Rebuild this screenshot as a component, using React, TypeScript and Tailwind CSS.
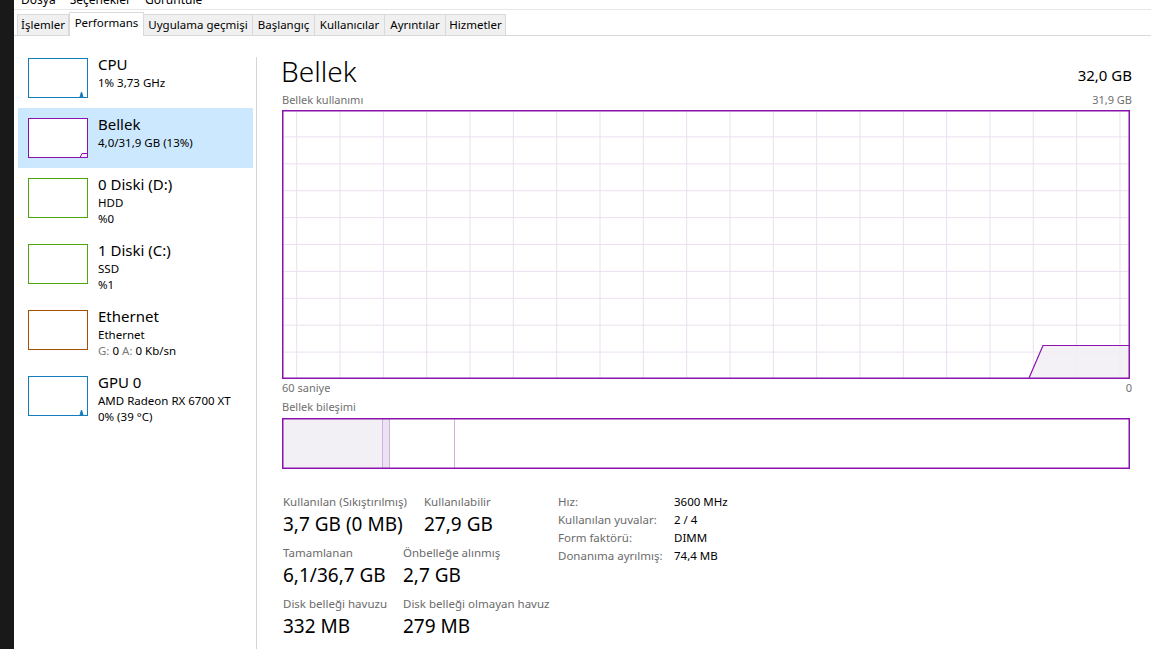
import React from 'react';

const PURPLE = '#8b12ae';

const tabs = [
  { label: 'İşlemler', w: 'w-[52px]' },
  { label: 'Performans', w: 'w-[75px]', active: true },
  { label: 'Uygulama geçmişi', w: 'w-[109px]' },
  { label: 'Başlangıç', w: 'w-[62px]' },
  { label: 'Kullanıcılar', w: 'w-[70px]' },
  { label: 'Ayrıntılar', w: 'w-[61px]' },
  { label: 'Hizmetler', w: 'w-[60px]' },
];

const Thumb: React.FC<{ color: string; kind?: 'spike' | 'mem' }> = ({ color, kind }) => (
  <svg width="60" height="40" viewBox="0 0 60 40" className="shrink-0">
    <rect x="0.5" y="0.5" width="59" height="39" fill="white" stroke={color} strokeWidth="1" />
    {kind === 'spike' && <polyline points="52,39 53.5,34 55,39" fill={color} stroke={color} strokeWidth="1" />}
    {kind === 'mem' && <polygon points="52,39.5 54,35.5 59.5,35.5 59.5,39.5" fill="#f3eef5" stroke={color} strokeWidth="1" />}
  </svg>
);

interface SideItemProps {
  title: string;
  lines: React.ReactNode[];
  color: string;
  kind?: 'spike' | 'mem';
  selected?: boolean;
  tall?: boolean;
}

const SideItem: React.FC<SideItemProps> = ({ title, lines, color, kind, selected, tall }) => (
  <div className={`flex gap-[10px] px-[10px] pt-[10px] ${tall ? 'h-[66px]' : 'h-[60px]'} ${selected ? 'bg-[#cce8ff]' : ''}`}>
    <Thumb color={color} kind={kind} />
    <div className="flex flex-col text-black -mt-[3px]">
      <div className="text-[15px] leading-[19px]">{title}</div>
      {lines.map((l, i) => (
        <div key={i} className="text-[11.5px] leading-[15px] mt-[1px]">{l}</div>
      ))}
    </div>
  </div>
);

const UsageGraph: React.FC = () => {
  const w = 848;
  const h = 269;
  const vx: number[] = [];
  for (let x = 14.7; x < w; x += 43.33) vx.push(x);
  const hy: number[] = [];
  for (let i = 1; i < 10; i++) hy.push((h / 10) * i);
  return (
    <svg width={w} height={h} viewBox={`0 0 ${w} ${h}`} className="block">
      {vx.map((x) => (
        <line key={x} x1={x} y1={0} x2={x} y2={h} stroke="#ebdff0" strokeWidth="1" />
      ))}
      {hy.map((y) => (
        <line key={y} x1={0} y1={y} x2={w} y2={y} stroke="#ebdff0" strokeWidth="1" />
      ))}
      <polygon points={`747,${h - 1} 761,235.5 ${w - 1},235.5 ${w - 1},${h - 1}`} fill="#f1eef3" fillOpacity="0.85" />
      <polyline points={`747,${h - 1} 761,235.5 ${w - 1},235.5`} fill="none" stroke={PURPLE} strokeWidth="1.2" />
      <rect x="0.75" y="0.75" width={w - 1.5} height={h - 1.5} fill="none" stroke={PURPLE} strokeWidth="1.5" />
    </svg>
  );
};

const CompositionBar: React.FC = () => (
  <svg width="848" height="51" viewBox="0 0 848 51" className="block">
    <rect x="0" y="0" width="100" height="51" fill="#f3f0f5" />
    <rect x="100" y="0" width="7" height="51" fill="#ece2f1" />
    <line x1="100.5" y1="0" x2="100.5" y2="51" stroke="#cdb3da" />
    <line x1="107.5" y1="0" x2="107.5" y2="51" stroke="#cdb3da" />
    <line x1="172.5" y1="0" x2="172.5" y2="51" stroke="#cdb3da" />
    <rect x="0.75" y="0.75" width="846.5" height="49.5" fill="none" stroke={PURPLE} strokeWidth="1.5" />
  </svg>
);

const Stat: React.FC<{ label: string; value: string; w: string }> = ({ label, value, w }) => (
  <div className={`${w} shrink-0`}>
    <div className="text-[11.5px] leading-[16px] text-[#6b6b6b] whitespace-nowrap">{label}</div>
    <div className="text-[19px] leading-[29px] text-black whitespace-nowrap">{value}</div>
  </div>
);

const infoRows = [
  ['Hız:', '3600 MHz'],
  ['Kullanılan yuvalar:', '2 / 4'],
  ['Form faktörü:', 'DIMM'],
  ['Donanıma ayrılmış:', '74,4 MB'],
];

export default function App() {
  return (
    <div className="flex w-[1165px] h-[649px] overflow-hidden bg-white font-['Noto_Sans',sans-serif]">
      <div className="w-[14px] shrink-0 bg-[#191919]" />
      <div className="w-[1137px] shrink-0 flex flex-col">
        {/* menu */}
        <div className="h-[10px] overflow-hidden border-b border-[#e6e6e6] shrink-0">
          <div className="flex text-[12px] leading-[16px] -mt-[8px] pl-[7px] gap-[14px] text-black">
            <span>Dosya</span>
            <span>Seçenekler</span>
            <span>Görüntüle</span>
          </div>
        </div>
        {/* tabs */}
        <div className="h-[26px] flex items-end pl-[3px] border-b border-[#d9d9d9] shrink-0">
          {tabs.map((t) =>
            t.active ? (
              <div
                key={t.label}
                className={`${t.w} h-[24px] -mb-[1px] bg-white border border-b-0 border-[#d9d9d9] text-[11.5px] text-black flex items-center justify-center pb-[3px]`}
              >
                {t.label}
              </div>
            ) : (
              <div
                key={t.label}
                className={`${t.w} h-[21px] bg-[#f0f0f0] border border-b-0 border-l-0 first:border-l border-[#d9d9d9] text-[11.5px] text-black flex items-center justify-center`}
              >
                {t.label}
              </div>
            )
          )}
        </div>
        <div className="flex flex-1 min-h-0">
          {/* sidebar */}
          <div className="w-[243px] shrink-0 flex">
            <div className="flex-1 pl-[4px] pr-[3px] pt-[12px] flex flex-col">
              <SideItem title="CPU" lines={['1%  3,73 GHz']} color="#117dbb" kind="spike" />
              <SideItem title="Bellek" lines={['4,0/31,9 GB (13%)']} color={PURPLE} kind="mem" selected />
              <SideItem title="0 Diski (D:)" lines={['HDD', '%0']} color="#4da60c" tall />
              <SideItem title="1 Diski (C:)" lines={['SSD', '%1']} color="#4da60c" tall />
              <SideItem
                title="Ethernet"
                lines={[
                  'Ethernet',
                  <span key="e">
                    <span className="text-[#7a7a7a]">G:</span> 0 <span className="text-[#7a7a7a]">A:</span> 0 Kb/sn
                  </span>,
                ]}
                color="#a74f01"
                tall
              />
              <SideItem title="GPU 0" lines={['AMD Radeon RX 6700 XT', '0%  (39 °C)']} color="#117dbb" kind="spike" tall />
            </div>
            <div className="w-[1px] mt-[21px] bg-[#d4d4d4]" />
          </div>
          {/* main */}
          <div className="flex-1 pl-[25px] pr-[19px] pt-[16px] flex flex-col">
            <div className="h-[38px] flex items-end justify-between">
              <div className="text-[28px] leading-[38px] font-light text-black -ml-[1px]">Bellek</div>
              <div className="text-[15px] leading-[20px] text-black mb-[5px]">32,0 GB</div>
            </div>
            <div className="h-[20px] flex items-center justify-between text-[11px] text-[#707070]">
              <span>Bellek kullanımı</span>
              <span>31,9 GB</span>
            </div>
            <UsageGraph />
            <div className="h-[18px] flex items-center justify-between text-[11px] text-[#707070]">
              <span>60 saniye</span>
              <span>0</span>
            </div>
            <div className="h-[21px] flex items-center text-[11px] text-[#707070]">Bellek bileşimi</div>
            <CompositionBar />
            <div className="flex mt-[25px] pl-[1px]">
              <div className="w-[275px] shrink-0 flex flex-col gap-[6px]">
                <div className="flex">
                  <Stat label="Kullanılan (Sıkıştırılmış)" value="3,7 GB (0 MB)" w="w-[141px]" />
                  <Stat label="Kullanılabilir" value="27,9 GB" w="w-[120px]" />
                </div>
                <div className="flex">
                  <Stat label="Tamamlanan" value="6,1/36,7 GB" w="w-[120px]" />
                  <Stat label="Önbelleğe alınmış" value="2,7 GB" w="w-[140px]" />
                </div>
                <div className="flex">
                  <Stat label="Disk belleği havuzu" value="332 MB" w="w-[120px]" />
                  <Stat label="Disk belleği olmayan havuz" value="279 MB" w="w-[150px]" />
                </div>
              </div>
              <div className="flex flex-col -mt-[1px]">
                {infoRows.map(([k, v]) => (
                  <div key={k} className="flex h-[18px] items-center text-[11.5px]">
                    <span className="w-[116px] text-[#6b6b6b]">{k}</span>
                    <span className="text-black">{v}</span>
                  </div>
                ))}
              </div>
            </div>
          </div>
        </div>
      </div>
    </div>
  );
}
